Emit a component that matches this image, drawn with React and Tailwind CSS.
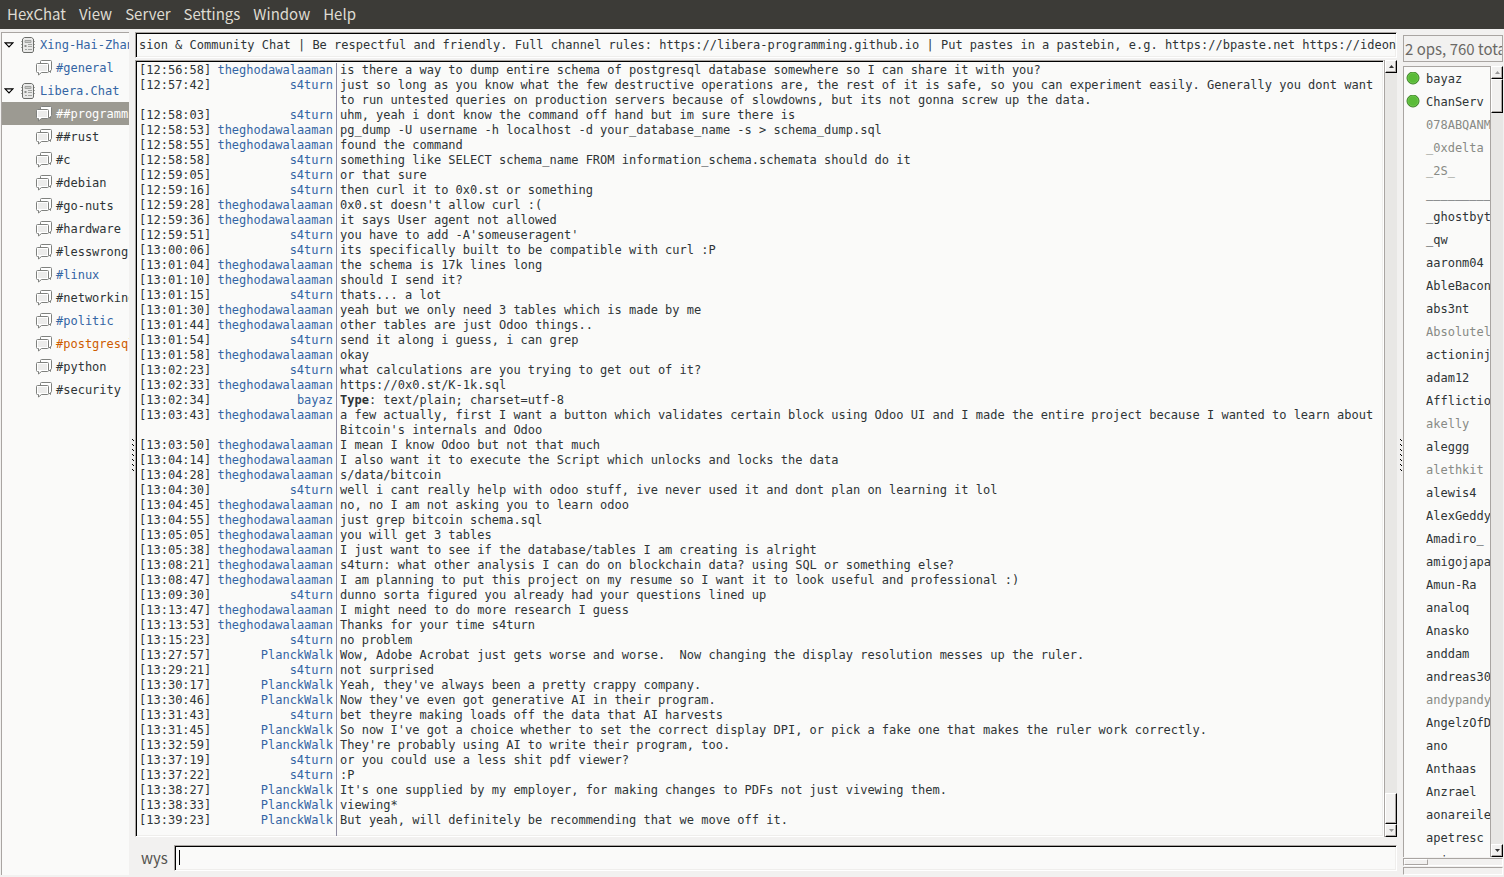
import React, { useState } from "react";

const menus = ["HexChat", "View", "Server", "Settings", "Window", "Help"];

const networks = [
  {
    name: "Xing-Hai-Zhan",
    channels: [{ name: "#general", state: "message" }],
  },
  {
    name: "Libera.Chat",
    channels: [
      { name: "##programming" },
      { name: "##rust" },
      { name: "#c" },
      { name: "#debian" },
      { name: "#go-nuts" },
      { name: "#hardware" },
      { name: "#lesswrong" },
      { name: "#linux", state: "message" },
      { name: "#networking" },
      { name: "#politic", state: "message" },
      { name: "#postgresql", state: "data" },
      { name: "#python" },
      { name: "#security" },
    ],
  },
];

const T = "theghodawalaaman";
const S = "s4turn";
const P = "PlanckWalk";

const messages = [
  ["12:56:58", T, "is there a way to dump entire schema of postgresql database somewhere so I can share it with you?"],
  ["12:57:42", S, "just so long as you know what the few destructive operations are, the rest of it is safe, so you can experiment easily. Generally you dont want to run untested queries on production servers because of slowdowns, but its not gonna screw up the data."],
  ["12:58:03", S, "uhm, yeah i dont know the command off hand but im sure there is"],
  ["12:58:53", T, "pg_dump -U username -h localhost -d your_database_name -s > schema_dump.sql"],
  ["12:58:55", T, "found the command"],
  ["12:58:58", S, "something like SELECT schema_name FROM information_schema.schemata should do it"],
  ["12:59:05", S, "or that sure"],
  ["12:59:16", S, "then curl it to 0x0.st or something"],
  ["12:59:28", T, "0x0.st doesn't allow curl :("],
  ["12:59:36", T, "it says User agent not allowed"],
  ["12:59:51", S, "you have to add -A'someuseragent'"],
  ["13:00:06", S, "its specifically built to be compatible with curl :P"],
  ["13:01:04", T, "the schema is 17k lines long"],
  ["13:01:10", T, "should I send it?"],
  ["13:01:15", S, "thats... a lot"],
  ["13:01:30", T, "yeah but we only need 3 tables which is made by me"],
  ["13:01:44", T, "other tables are just Odoo things.."],
  ["13:01:54", S, "send it along i guess, i can grep"],
  ["13:01:58", T, "okay"],
  ["13:02:23", S, "what calculations are you trying to get out of it?"],
  ["13:02:33", T, "https://0x0.st/K-1k.sql"],
  ["13:02:34", "bayaz", <><b>Type</b>: text/plain; charset=utf-8</>],
  ["13:03:43", T, "a few actually, first I want a button which validates certain block using Odoo UI and I made the entire project because I wanted to learn about Bitcoin's internals and Odoo"],
  ["13:03:50", T, "I mean I know Odoo but not that much"],
  ["13:04:14", T, "I also want it to execute the Script which unlocks and locks the data"],
  ["13:04:28", T, "s/data/bitcoin"],
  ["13:04:30", S, "well i cant really help with odoo stuff, ive never used it and dont plan on learning it lol"],
  ["13:04:45", T, "no, no I am not asking you to learn odoo"],
  ["13:04:55", T, "just grep bitcoin schema.sql"],
  ["13:05:05", T, "you will get 3 tables"],
  ["13:05:38", T, "I just want to see if the database/tables I am creating is alright"],
  ["13:08:21", T, "s4turn: what other analysis I can do on blockchain data? using SQL or something else?"],
  ["13:08:47", T, "I am planning to put this project on my resume so I want it to look useful and professional :)"],
  ["13:09:30", S, "dunno sorta figured you already had your questions lined up"],
  ["13:13:47", T, "I might need to do more research I guess"],
  ["13:13:53", T, "Thanks for your time s4turn"],
  ["13:15:23", S, "no problem"],
  ["13:27:57", P, "Wow, Adobe Acrobat just gets worse and worse.  Now changing the display resolution messes up the ruler."],
  ["13:29:21", S, "not surprised"],
  ["13:30:17", P, "Yeah, they've always been a pretty crappy company."],
  ["13:30:46", P, "Now they've even got generative AI in their program."],
  ["13:31:43", S, "bet theyre making loads off the data that AI harvests"],
  ["13:31:45", P, "So now I've got a choice whether to set the correct display DPI, or pick a fake one that makes the ruler work correctly."],
  ["13:32:59", P, "They're probably using AI to write their program, too."],
  ["13:37:19", S, "or you could use a less shit pdf viewer?"],
  ["13:37:22", S, ":P"],
  ["13:38:27", P, "It's one supplied by my employer, for making changes to PDFs not just vivewing them."],
  ["13:38:33", P, "viewing*"],
  ["13:39:23", P, "But yeah, will definitely be recommending that we move off it."],
];

const users = [
  { nick: "bayaz", op: true },
  { nick: "ChanServ", op: true },
  { nick: "078ABQANM", away: true },
  { nick: "_0xdelta", away: true },
  { nick: "_2S_", away: true },
  { nick: "_________" },
  { nick: "_ghostbyte" },
  { nick: "_qw" },
  { nick: "aaronm04" },
  { nick: "AbleBacon" },
  { nick: "abs3nt" },
  { nick: "Absolutely", away: true },
  { nick: "actioninja" },
  { nick: "adam12" },
  { nick: "Affliction" },
  { nick: "akelly", away: true },
  { nick: "aleggg" },
  { nick: "alethkit", away: true },
  { nick: "alewis4" },
  { nick: "AlexGeddy" },
  { nick: "Amadiro_" },
  { nick: "amigojapan" },
  { nick: "Amun-Ra" },
  { nick: "analoq" },
  { nick: "Anasko" },
  { nick: "anddam" },
  { nick: "andreas303" },
  { nick: "andypandy", away: true },
  { nick: "AngelzOfD" },
  { nick: "ano" },
  { nick: "Anthaas" },
  { nick: "Anzrael" },
  { nick: "aonareile" },
  { nick: "apetresc" },
  { nick: "aria" },
];

const mono = "font-['DejaVu_Sans_Mono','Liberation_Mono',monospace] text-[12px]";
const sunken =
  "bg-[#fafaf9] border border-t-[#a9a5a2] border-l-[#a9a5a2] border-r-white border-b-white shadow-[inset_1px_1px_0_#000,inset_-1px_-1px_0_#efeeec]";
const raised =
  "bg-[#f2f1f0] border border-t-white border-l-white border-r-black border-b-black shadow-[inset_-1px_-1px_0_#a9a5a2]";

const ServerIcon = () => (
  <svg width="16" height="16" viewBox="0 0 16 16" className="shrink-0" aria-hidden="true">
    <path d="M1 4.5h2M1 7.5h2M1 10.5h2M13 4.5h2M13 7.5h2M13 10.5h2" stroke="#a5a7a4" />
    <path d="M4.500 .5h7l2 1.500v12l-1 1.500h-9l-1-1.500v-12z" fill="#e9e9e8" stroke="#6b6d6a" />
    <path d="M5 3.500h6v2H5z" fill="#c9c9c8" stroke="#a3a5a2" />
    <path d="M4.500 8h2v2h-2z" fill="#8b8d8a" />
    <path d="M8 7.500h4M8 9.500h4M5 12.500h2M8 12.500h4" stroke="#a3a5a2" />
  </svg>
);

const ChatIcon = () => (
  <svg width="16" height="16" viewBox="0 0 16 16" className="shrink-0" aria-hidden="true">
    <path
      d="M4.500 1.500q0-1 1-1h9q1 0 1 1v8q0 1-1 1v2l-2-2h-7q-1 0-1-1z"
      fill="#fff"
      stroke="#7f817e"
    />
    <path
      d="M.5 4.500q0-1 1-1h10q1 0 1 1v7q0 1-1 1h-6l-3 2.500v-2.500h-1q-1 0-1-1z"
      fill="#fff"
      stroke="#7f817e"
    />
    <path d="M2 5h9v6h-9z" fill="#ececeb" />
  </svg>
);

const Expander = () => (
  <svg width="10" height="6" viewBox="0 0 10 6" className="shrink-0" aria-hidden="true">
    <path d="M1 .8h8L5 5z" fill="#fff" stroke="#000" strokeWidth="1.200" />
  </svg>
);

const OpIcon = () => (
  <svg width="14" height="14" viewBox="0 0 14 14" className="shrink-0" aria-hidden="true">
    <circle cx="7" cy="6" r="6" fill="#5abb38" stroke="#3b7a26" />
    <circle cx="7" cy="6" r="5" fill="none" stroke="#6cc64c" />
  </svg>
);

const ScrollButton = ({ down = false, disabled = false }) => (
  <button
    type="button"
    aria-label={down ? "Scroll down" : "Scroll up"}
    disabled={disabled}
    className={`${raised} h-[13px] w-full shrink-0 flex items-center justify-center`}
  >
    <svg width="5" height="3" viewBox="0 0 5 3" aria-hidden="true">
      <path d={down ? "M0 0h5L2.500 3z" : "M0 3h5L2.500 0z"} fill={disabled ? "#999" : "#333"} />
    </svg>
  </button>
);

const ScrollBar = ({ atEnd = false }) => (
  <div className="w-[13px] shrink-0 flex flex-col bg-[#e8e7e5] border-l border-[#a9a5a2]">
    <ScrollButton disabled={!atEnd} />
    {atEnd && <div className="flex-1" />}
    <div className={`${raised} ${atEnd ? "h-[31px]" : "h-[34px]"} shrink-0`} />
    {!atEnd && <div className="flex-1" />}
    <ScrollButton down disabled={atEnd} />
  </div>
);

const Grip = () => (
  <div className="w-[6px] shrink-0 flex flex-col items-end justify-center gap-[3px] pt-1 pr-px" role="separator">
    {[0, 1, 2, 3, 4, 5, 6].map((n) => (
      <svg key={n} width="2" height="2" viewBox="0 0 2 2" aria-hidden="true">
        <path d="M0 0h1v1h1v1H1V1H0z" fill="#000" />
      </svg>
    ))}
  </div>
);

const channelColor = (channel, selected) => {
  if (selected) return "bg-[#9c9a92] text-white";
  if (channel.state === "message") return "text-[#3465a4]";
  if (channel.state === "data") return "text-[#ce5c00]";
  return "text-[#2e3436]";
};

const ChannelTree = () => {
  const [selected, setSelected] = useState("##programming");
  const [closed, setClosed] = useState({});

  return (
    <nav
      aria-label="Channels"
      className={`${mono} w-[128px] ml-px mt-[3px] mb-[2px] shrink-0 overflow-hidden bg-[#fafaf9] border-l border-t border-[#a9a5a2]`}
    >
      {networks.map((net) => (
        <div key={net.name}>
          <button
            type="button"
            aria-expanded={!closed[net.name]}
            onClick={() => setClosed({ ...closed, [net.name]: !closed[net.name] })}
            className="flex items-center h-[23px] w-full pl-[2px] text-[#3465a4] whitespace-nowrap"
          >
            <Expander />
            <span className="flex items-center gap-1 pl-[6px]">
              <ServerIcon />
              {net.name}
            </span>
          </button>
          {!closed[net.name] &&
            net.channels.map((ch) => (
              <button
                key={ch.name}
                type="button"
                onClick={() => setSelected(ch.name)}
                className={`flex items-center gap-1 h-[23px] w-full overflow-hidden pl-[34px] whitespace-nowrap ${channelColor(ch, selected === ch.name)}`}
              >
                <ChatIcon />
                {ch.name}
              </button>
            ))}
        </div>
      ))}
    </nav>
  );
};

const ChatLog = () => (
  <div className="flex flex-1 min-h-0 mt-[2px]">
    <div className={`${sunken} ${mono} flex-1 min-w-0 flex flex-col overflow-hidden pl-[3px] pt-[2px] leading-[15px] text-[#2e3436]`}>
      {messages.map(([time, nick, text]) => (
        <div key={time} className="flex shrink-0">
          <span className="w-[73px] shrink-0">[{time}]</span>
          <span className="w-[125px] shrink-0 border-r border-[#8d8aa0] pr-[3px] text-right text-[#3465a4]">
            {nick}
          </span>
          <span className="flex-1 pl-[3px] whitespace-pre-wrap">{text}</span>
        </div>
      ))}
      <div className="w-[198px] flex-1 border-r border-[#8d8aa0]" />
    </div>
    <ScrollBar atEnd />
  </div>
);

const UserList = () => (
  <aside className="w-[101px] shrink-0 flex flex-col pt-[6px] pb-[2px] pr-px">
    <div className="h-[27px] shrink-0 overflow-hidden whitespace-nowrap border border-[#a9a5a2] pl-px text-[15px] leading-[25px] text-[#6b6966]">
      2 ops, 760 total
    </div>
    <div className="flex flex-1 min-h-0 mt-[4px]">
      <ul className={`${mono} flex-1 min-w-0 overflow-hidden bg-[#fafaf9] border-l border-t border-[#a9a5a2]`}>
        {users.map((u) => (
          <li
            key={u.nick}
            className={`flex items-center h-[23px] pl-[2px] gap-[6px] whitespace-nowrap ${u.away ? "text-[#888a85]" : "text-[#2e3436]"}`}
          >
            {u.op ? <OpIcon /> : <span className="size-[14px] shrink-0" />}
            {u.nick}
          </li>
        ))}
      </ul>
      <ScrollBar />
    </div>
    <div className="h-[8px] mt-px shrink-0 border border-t-[#a9a5a2] border-l-[#a9a5a2] border-r-white border-b-white">
      <div className="h-full w-[24px] border border-t-white border-l-white border-r-[#a9a5a2] border-b-[#a9a5a2]" />
    </div>
    <div className="h-[8px] mt-px shrink-0 border border-t-[#a9a5a2] border-l-[#a9a5a2] border-r-white border-b-white" />
  </aside>
);

const App = () => {
  const [topic, setTopic] = useState(
    "sion & Community Chat | Be respectful and friendly. Full channel rules: https://libera-programming.github.io | Put pastes in a pastebin, e.g. https://bpaste.net https://ideone.com"
  );
  const [draft, setDraft] = useState("");

  return (
    <div className="h-screen flex flex-col overflow-hidden bg-[#f2f1f0] font-['Noto_Sans_CJK_SC','Noto_Sans',sans-serif]">
      <header className="h-[29px] shrink-0 flex items-center gap-[13px] px-[7px] bg-[#3c3b37] text-[#dfdbd2] text-[15px]">
        {menus.map((m) => (
          <button key={m} type="button">
            {m}
          </button>
        ))}
      </header>
      <div className="flex flex-1 min-h-0">
        <ChannelTree />
        <Grip />
        <main className="flex-1 min-w-0 flex flex-col pt-[3px] pb-[6px]">
          <input
            aria-label="Topic"
            value={topic}
            onChange={(e) => setTopic(e.target.value)}
            className={`${sunken} ${mono} h-[26px] w-full shrink-0 pl-[3px] text-[#2e3436] outline-none`}
          />
          <ChatLog />
          <div className="flex items-center shrink-0 mt-[8px]">
            <label htmlFor="message" className="w-[39px] shrink-0 pl-[6px] text-[15px] leading-[26px] text-[#55534f]">
              wys
            </label>
            <div className="relative flex-1 min-w-0 flex">
              <input
                id="message"
                value={draft}
                onChange={(e) => setDraft(e.target.value)}
                className={`${sunken} ${mono} peer h-[26px] w-full px-[4px] text-black outline-none`}
              />
              {!draft && <span className="absolute left-[5px] top-[5px] h-[15px] w-px bg-black peer-focus:hidden" />}
            </div>
          </div>
        </main>
        <Grip />
        <UserList />
      </div>
    </div>
  );
};

export default App;
